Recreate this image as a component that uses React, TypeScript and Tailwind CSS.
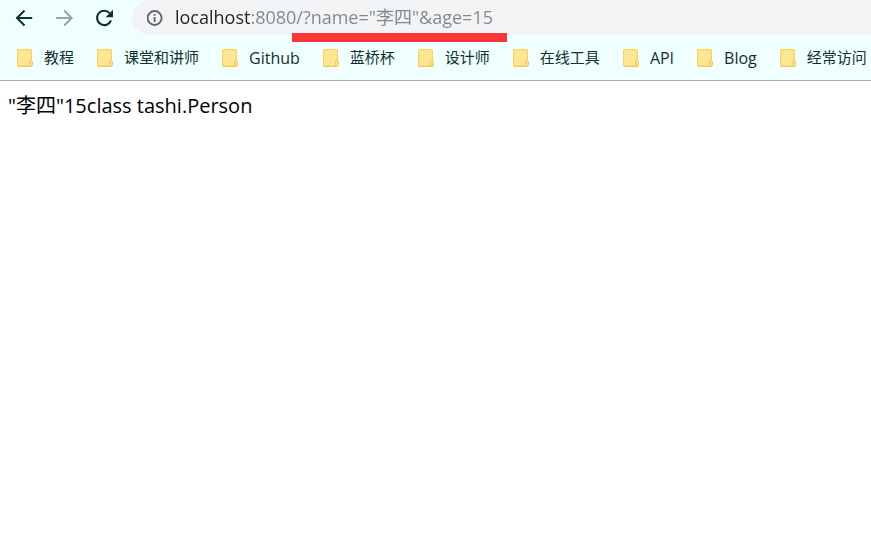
import { useState } from "react";

const bookmarks = [
  { name: "教程", size: "text-[15px]" },
  { name: "课堂和讲师", size: "text-[15px]" },
  { name: "Github", size: "text-base" },
  { name: "蓝桥杯", size: "text-[15px]" },
  { name: "设计师", size: "text-[15px]" },
  { name: "在线工具", size: "text-[15px]" },
  { name: "API", size: "text-base" },
  { name: "Blog", size: "text-base" },
  { name: "经常访问", size: "text-[15px]" },
];

function BackIcon() {
  return (
    <svg width="18" height="18" viewBox="0 0 18 18" fill="none" stroke="currentColor" strokeWidth="2" aria-hidden="true">
      <path d="M17.2 9H2.5M9.5 1.5L2 9l7.5 7.5" />
    </svg>
  );
}

function ForwardIcon() {
  return (
    <svg width="18" height="18" viewBox="0 0 18 18" fill="none" stroke="currentColor" strokeWidth="2" aria-hidden="true">
      <path d="M1.2 9h15M9.2 1.5L16.7 9l-7.5 7.5" />
    </svg>
  );
}

function ReloadIcon() {
  return (
    <svg width="18" height="18" viewBox="0 0 18 18" fill="none" aria-hidden="true">
      <path d="M16 11.4A7.2 7.2 0 1 1 14.6 4.1" stroke="currentColor" strokeWidth="2.1" />
      <path d="M18 .8v7.4h-7.4z" fill="currentColor" />
    </svg>
  );
}

function InfoIcon() {
  return (
    <svg width="16" height="16" viewBox="0 0 16 16" fill="none" aria-hidden="true">
      <circle cx="7.6" cy="8" r="7" stroke="#5f6368" strokeWidth="1.8" />
      <path d="M6.7 7h1.8v5H6.7zM6.7 4h1.8v1.8H6.7z" fill="#5f6368" />
    </svg>
  );
}

function FolderIcon() {
  return (
    <svg width="16" height="18" viewBox="0 0 16 18" fill="none" aria-hidden="true">
      <rect x=".6" y=".6" width="13.8" height="16.8" rx="1" fill="#ffe693" stroke="#fad45c" strokeWidth="1.2" />
      <path d="M1 17.3h12" stroke="#efc75c" strokeWidth="1.2" />
      <path d="M12.6 17.2v-4.4q0-1.4 1.2-1.4t1.6 1.4v3.4q0 1.2-1.2 1.2z" fill="#ffe28a" stroke="#f2c94f" />
    </svg>
  );
}

export default function App() {
  const [url, setUrl] = useState('localhost:8080/?name="李四"&age=15');

  return (
    <div className="min-h-screen bg-white font-['Open_Sans','Noto_Sans_CJK_SC',sans-serif] text-black">
      <header className="border-b border-[#a3b1b3] bg-[#f0ffff] text-[#10302f]">
        <div className="flex h-[35px] pl-1">
          <nav aria-label="History" className="flex">
            <button type="button" aria-label="Back" className="flex w-10 items-center justify-center">
              <BackIcon />
            </button>
            <button type="button" aria-label="Forward" className="flex w-10 items-center justify-center text-[#94a5a5]">
              <ForwardIcon />
            </button>
            <button type="button" aria-label="Reload" className="flex w-10 items-center justify-center">
              <ReloadIcon />
            </button>
          </nav>
          <form
            className="relative ml-2 flex min-w-0 flex-1 items-center gap-3 rounded-l-full bg-[#f1f3f4] pl-[15px]"
            onSubmit={(event) => event.preventDefault()}
          >
            <InfoIcon />
            <input
              type="text"
              aria-label="Address"
              value={url}
              onChange={(event) => setUrl(event.target.value)}
              spellCheck={false}
              className="h-full min-w-0 flex-1 bg-[linear-gradient(to_right,#202124_75px,#80868b_75px)] bg-clip-text pb-1 text-lg text-transparent caret-black outline-none"
            />
            <span className="absolute top-[33px] left-40 h-[9px] w-[215px] bg-[#fc3636]" />
          </form>
        </div>
        <nav aria-label="Bookmarks" className="flex h-[45px] items-center gap-[23px] overflow-hidden pl-[17px]">
          {bookmarks.map(({ name, size }) => (
            <button key={name} type="button" className={`flex shrink-0 items-center gap-[11px] ${size}`}>
              <FolderIcon />
              {name}
            </button>
          ))}
        </nav>
      </header>
      <main className="px-2 py-[11px] text-xl leading-7">"李四"15class tashi.Person</main>
    </div>
  );
}
